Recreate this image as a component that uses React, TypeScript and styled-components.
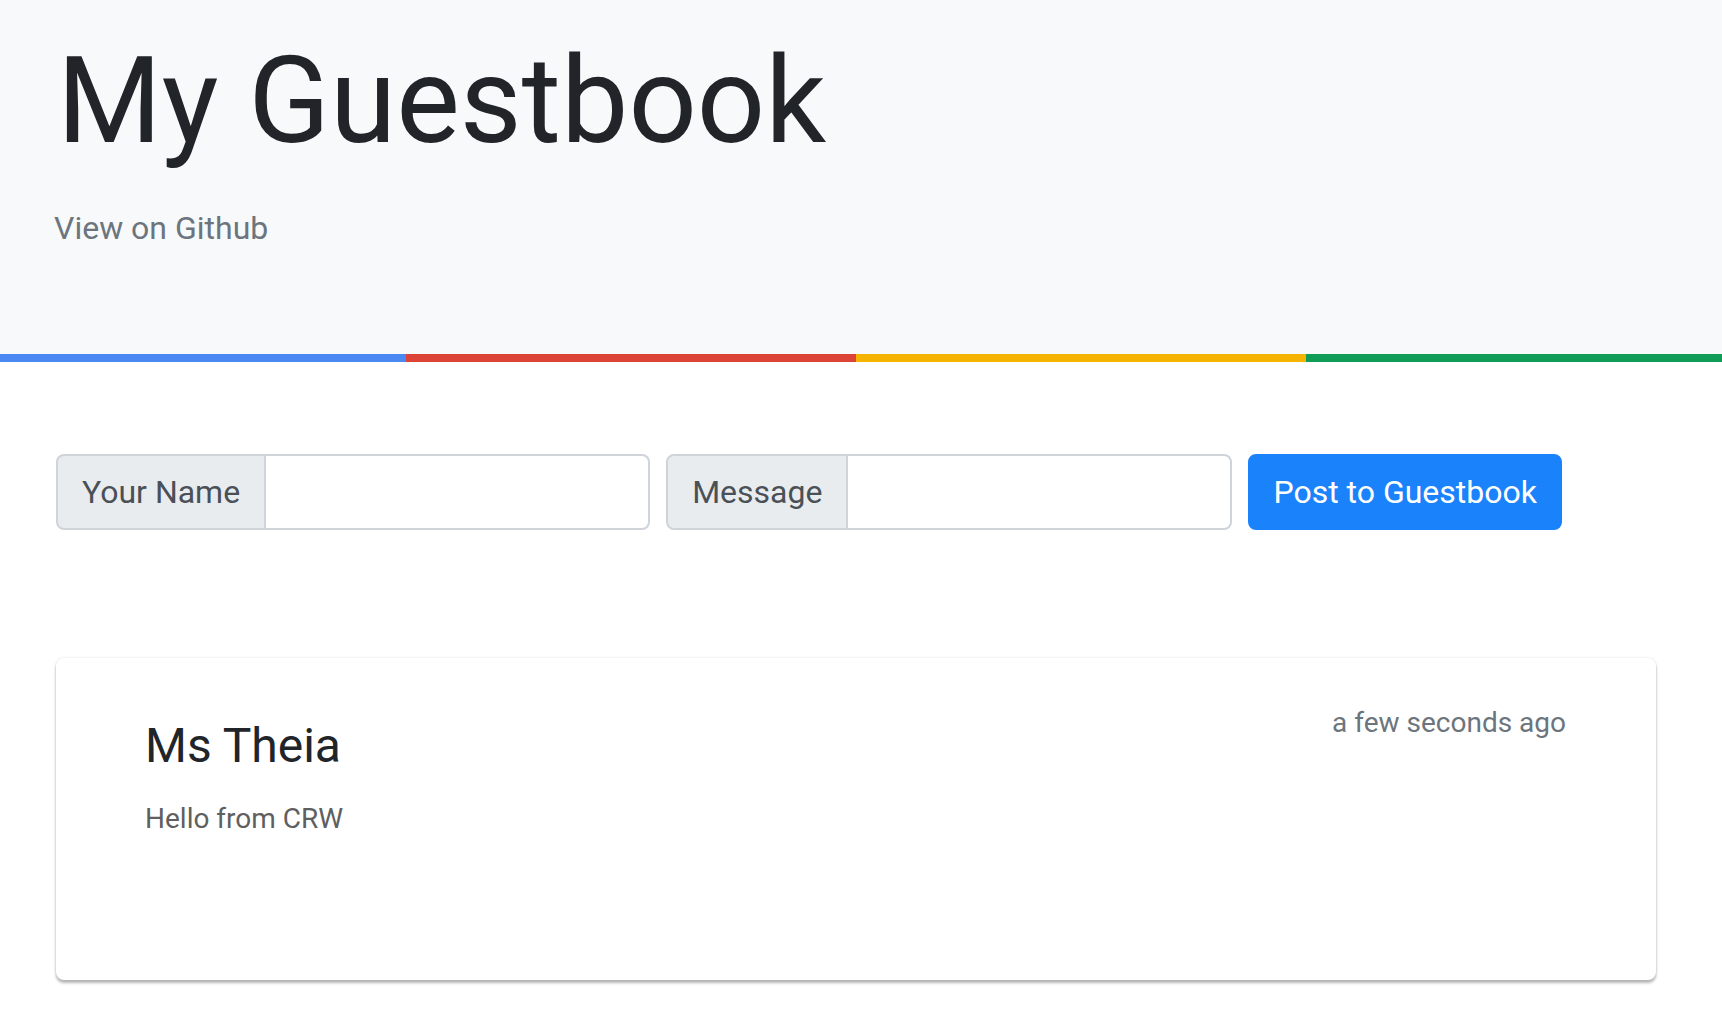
import React from "react";
import styled, { createGlobalStyle } from "styled-components";

const GlobalStyle = createGlobalStyle`
  html, body { margin: 0; padding: 0; background: #ffffff; }
  body {
    font-family: Roboto, "Noto Sans", "Liberation Sans", sans-serif;
    color: #212529;
    -webkit-font-smoothing: antialiased;
  }
  * { box-sizing: border-box; }
`;

const Page = styled.div`
  display: flex;
  flex-direction: column;
  min-height: 1018px;
`;

const Hero = styled.header`
  background: #f8f9fa;
  padding: 28px 54px 102px;
`;

const Title = styled.h1`
  margin: 0;
  padding-left: 3px;
  font-size: 120px;
  font-weight: 400;
  line-height: 1.22;
  color: #212529;
`;

const GithubLink = styled.a`
  display: block;
  margin-top: 30px;
  font-size: 32px;
  line-height: 1.5;
  color: #6c757d;
  text-decoration: none;
`;

const Stripe = styled.div`
  display: grid;
  grid-template-columns: 406px 450px 450px 1fr;
  height: 8px;
`;

const StripeSegment = styled.span<{ $color: string }>`
  background: ${(p) => p.$color};
`;

const Main = styled.main`
  padding: 92px 66px 0 56px;
  display: flex;
  flex-direction: column;
  gap: 128px;
`;

const Form = styled.form`
  display: flex;
  align-items: stretch;
  gap: 16px;
  height: 76px;
`;

const InputGroup = styled.div`
  display: flex;
  align-items: stretch;
`;

const Addon = styled.label`
  display: flex;
  align-items: center;
  padding: 0 24px;
  background: #e9ecef;
  border: 2px solid #ced4da;
  border-radius: 8px 0 0 8px;
  font-size: 32px;
  color: #495057;
  white-space: nowrap;
`;

const TextInput = styled.input`
  width: 384px;
  border: 2px solid #ced4da;
  border-left: none;
  border-radius: 0 8px 8px 0;
  background: #ffffff;
  font-family: inherit;
  font-size: 32px;
  color: #495057;
  padding: 0 24px;
  outline: none;
`;

const PostButton = styled.button`
  padding: 0 23px;
  background: #1a82fb;
  border: 2px solid #1a82fb;
  border-radius: 8px;
  color: #ffffff;
  font-family: inherit;
  font-size: 32px;
  cursor: pointer;
`;

const Entry = styled.article`
  background: #ffffff;
  border-radius: 8px;
  box-shadow: 0 3px 3px rgba(0, 0, 0, 0.28), 0 0 3px rgba(0, 0, 0, 0.1);
  padding: 44px 90px 140px 89px;
`;

const EntryHead = styled.div`
  display: flex;
  justify-content: space-between;
  align-items: flex-start;
`;

const EntryName = styled.h2`
  margin: 15px 0 0;
  font-size: 48px;
  font-weight: 400;
  line-height: 1.2;
  color: #212529;
`;

const EntryTime = styled.span`
  font-size: 28px;
  line-height: 1.5;
  color: #6c757d;
`;

const EntryMessage = styled.p`
  margin: 23px 0 0;
  font-size: 28px;
  line-height: 1.5;
  color: #5f5f5f;
`;

const stripeColors = ["#4a89f3", "#db4437", "#f4b400", "#0f9d58"];

export default function App() {
  return (
    <Page>
      <GlobalStyle />
      <Hero>
        <Title>My Guestbook</Title>
        <GithubLink href="#">View on Github</GithubLink>
      </Hero>
      <Stripe>
        {stripeColors.map((c) => (
          <StripeSegment key={c} $color={c} />
        ))}
      </Stripe>
      <Main>
        <Form onSubmit={(e) => e.preventDefault()}>
          <InputGroup>
            <Addon htmlFor="name">Your Name</Addon>
            <TextInput id="name" type="text" />
          </InputGroup>
          <InputGroup>
            <Addon htmlFor="message">Message</Addon>
            <TextInput id="message" type="text" />
          </InputGroup>
          <PostButton type="submit">Post to Guestbook</PostButton>
        </Form>
        <Entry>
          <EntryHead>
            <EntryName>Ms Theia</EntryName>
            <EntryTime>a few seconds ago</EntryTime>
          </EntryHead>
          <EntryMessage>Hello from CRW</EntryMessage>
        </Entry>
      </Main>
    </Page>
  );
}
